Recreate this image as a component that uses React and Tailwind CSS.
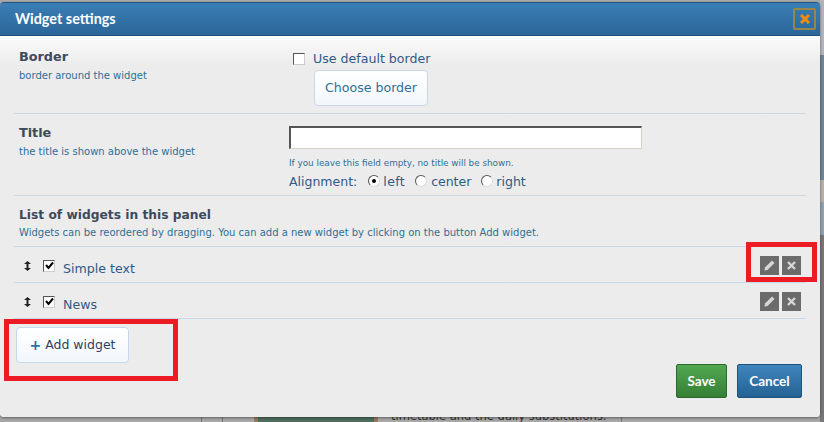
import React from 'react';

const Check = ({ checked }) => (
  <span className="w-[12px] h-[12px] bg-white border border-t-[#555] border-l-[#555] border-r-[#ccc] border-b-[#ccc] flex items-center justify-center shrink-0">
    {checked && (
      <svg width="9" height="9" viewBox="0 0 9 9">
        <path d="M1 4 L3.5 7 L8 1.5" fill="none" stroke="#000" strokeWidth="2" />
      </svg>
    )}
  </span>
);

const Radio = ({ checked }) => (
  <span className="w-[12px] h-[12px] rounded-full bg-white border border-t-[#555] border-l-[#555] border-r-[#ddd] border-b-[#ddd] flex items-center justify-center shrink-0 -mt-[3px]">
    {checked && <span className="w-[4px] h-[4px] rounded-full bg-black" />}
  </span>
);

const Arrows = () => (
  <svg width="7" height="10" viewBox="0 0 7 10" className="shrink-0">
    <path d="M3.5 0 L7 3 H4.5 V7 H7 L3.5 10 L0 7 H2.5 V3 H0 Z" fill="#222" />
  </svg>
);

const IconButton = ({ children }) => (
  <span className="w-[19px] h-[19px] bg-[#6b6b6b] flex items-center justify-center">{children}</span>
);

const Pencil = () => (
  <svg width="11" height="11" viewBox="0 0 11 11">
    <path d="M8 0.5 L10.5 3 L3.5 10 L0.5 10.5 L1 7.5 Z" fill="#d6d6d6" />
  </svg>
);

const Cross = () => (
  <svg width="9" height="9" viewBox="0 0 9 9">
    <path d="M1 1 L8 8 M8 1 L1 8" stroke="#d6d6d6" strokeWidth="2.4" />
  </svg>
);

const WidgetRow = ({ name }) => (
  <div className="h-[36px] border-b border-[#c6d9ec] flex items-center pl-[10px] pr-[5px] text-[#2f5a86]">
    <span className="mt-[2px]"><Arrows /></span>
    <span className="ml-[12px] mt-[2px]"><Check checked /></span>
    <span className="ml-[8px] text-[12.6px] mt-[9px]">{name}</span>
    <span className="ml-auto flex gap-[3px] mt-[2px]">
      <IconButton><Pencil /></IconButton>
      <IconButton><Cross /></IconButton>
    </span>
  </div>
);

export default function App() {
  return (
    <div className="relative w-[824px] h-[422px] overflow-hidden bg-[#a9a9a9] font-['DejaVu_Sans',sans-serif]">
      {/* page behind the dialog */}
      <div className="absolute left-[201px] top-[400px] w-px h-[22px] bg-[#777]" />
      <div className="absolute left-[222px] top-[400px] w-px h-[22px] bg-[#777]" />
      <div className="absolute left-[254px] top-[400px] w-[124px] h-[22px] bg-[#4f6f5e] border-x-4 border-[#9a7a60]" />
      <div className="absolute left-[391px] top-[408px] text-[11.5px] leading-[16px] text-[#333] whitespace-nowrap">timetable and the daily substitutions.</div>
      <div className="absolute left-[621px] top-[400px] w-px h-[22px] bg-[#777]" />
      <div className="absolute right-0 top-0 w-[4px] h-full flex flex-col">
        <div className="h-[55px] bg-[#b4b4bc]" />
        <div className="h-[125px] bg-[#6f8494]" />
        <div className="h-[22px] bg-[#b5b0a8]" />
        <div className="h-[33px] bg-[#8fa0ae]" />
        <div className="h-[187px] bg-[#77777a]" />
      </div>

      <div className="relative w-[820px] h-[415px] mt-[2px] bg-[#ececec] rounded-[4px] shadow-[0_1px_3px_rgba(0,0,0,0.45)] flex flex-col">
        <div className="h-[34px] shrink-0 bg-gradient-to-b from-[#3a7fb6] to-[#2b6699] border-b border-t border-[#1f527f] rounded-t-[4px] flex items-center justify-between pl-[15px] pr-[4px]">
          <span className="text-white text-[14.4px] font-bold font-['Lato',sans-serif]">Widget settings</span>
          <span className="w-[23px] h-[22px] border-2 border-[#96854e] rounded-[2px] flex items-center justify-center">
            <svg width="10" height="10" viewBox="0 0 10 10">
              <path d="M1 1 L9 9 M9 1 L1 9" stroke="#f28c0f" strokeWidth="3" />
            </svg>
          </span>
        </div>

        <div className="flex-1 bg-gradient-to-b from-[#fbfbfb] to-[#ececec] to-[30px] px-[14px] flex flex-col rounded-b-[4px]">
          <div className="h-[78px] border-b border-[#cfd6dc] flex shrink-0">
            <div className="w-[275px] pl-[5px] pt-[14px]">
              <div className="text-[#3d4a5c] text-[12.8px] font-bold leading-[14px]">Border</div>
              <div className="text-[#2f6f96] text-[10px] mt-[6px] leading-[12px]">border around the widget</div>
            </div>
            <div className="pt-[15px]">
              <label className="flex items-center gap-[8px] pl-[4px] text-[#2f5a86] text-[12.6px] leading-[16px]">
                <Check />
                Use default border
              </label>
              <button className="block ml-[25px] mt-[3px] w-[114px] h-[36px] rounded-[4px] border border-[#c6d9ec] bg-gradient-to-b from-white to-[#f2f7fd] text-[#2f6f96] text-[12.6px]">
                Choose border
              </button>
            </div>
          </div>

          <div className="h-[82px] border-b border-[#cfd6dc] flex shrink-0">
            <div className="w-[275px] pl-[5px] pt-[12px]">
              <div className="text-[#3d4a5c] text-[12.8px] font-bold leading-[14px]">Title</div>
              <div className="text-[#2f6f96] text-[10px] mt-[6px] leading-[12px]">the title is shown above the widget</div>
            </div>
            <div className="pt-[12px]">
              <div className="w-[353px] h-[23px] bg-white border border-t-2 border-l-2 border-t-[#555] border-l-[#555] border-r-[#d4d0c8] border-b-[#d4d0c8]" />
              <div className="text-[#2f6f96] text-[8.8px] mt-[9px] leading-[11px]">If you leave this field empty, no title will be shown.</div>
              <div className="flex items-center text-[#2f5a86] text-[12.5px] leading-[16px] mt-[5px]">
                <span className="mr-[11px]">Alignment:</span>
                <Radio checked />
                <span className="ml-[3px] mr-[10px] tracking-[0.4px]">left</span>
                <Radio />
                <span className="ml-[4px] mr-[10px]">center</span>
                <Radio />
                <span className="ml-[3px]">right</span>
              </div>
            </div>
          </div>

          <div className="h-[51px] border-b border-[#c6d9ec] pl-[5px] pt-[11px] shrink-0">
            <div className="text-[#3d4a5c] text-[12.25px] font-bold leading-[16px]">List of widgets in this panel</div>
            <div className="text-[#2f6f96] text-[10px] mt-[4px] leading-[12px] whitespace-nowrap">Widgets can be reordered by dragging. You can add a new widget by clicking on the button Add widget.</div>
          </div>

          <WidgetRow name="Simple text" />
          <WidgetRow name="News" />

          <div className="mt-[8px] ml-[2px] shrink-0">
            <button className="w-[113px] h-[36px] rounded-[4px] border border-[#c6d9ec] bg-gradient-to-b from-white to-[#f2f7fd] text-[#2f3f5c] text-[12.5px] flex items-center justify-center gap-[4px]">
              <span className="text-[#2f6f96] font-bold text-[14px] leading-none">+</span>
              Add widget
            </button>
          </div>

          <div className="flex justify-end gap-[10px] mt-auto mb-[19px] mr-[4px] shrink-0">
            <button className="w-[51px] h-[34px] rounded-[2px] border border-[#2a6a2a] bg-gradient-to-b from-[#52a852] to-[#357f35] text-white text-[13.5px] font-bold font-['Lato',sans-serif]">Save</button>
            <button className="w-[65px] h-[34px] rounded-[2px] border border-[#1f527f] bg-gradient-to-b from-[#3f86bd] to-[#256294] text-white text-[13.5px] font-bold font-['Lato',sans-serif]">Cancel</button>
          </div>
        </div>
      </div>

      <div className="absolute left-[4px] top-[319px] w-[174px] h-[62px] border-[5px] border-[#ed1c24]" />
      <div className="absolute left-[746px] top-[242px] w-[71px] h-[40px] border-[5px] border-[#ed1c24]" />
    </div>
  );
}
